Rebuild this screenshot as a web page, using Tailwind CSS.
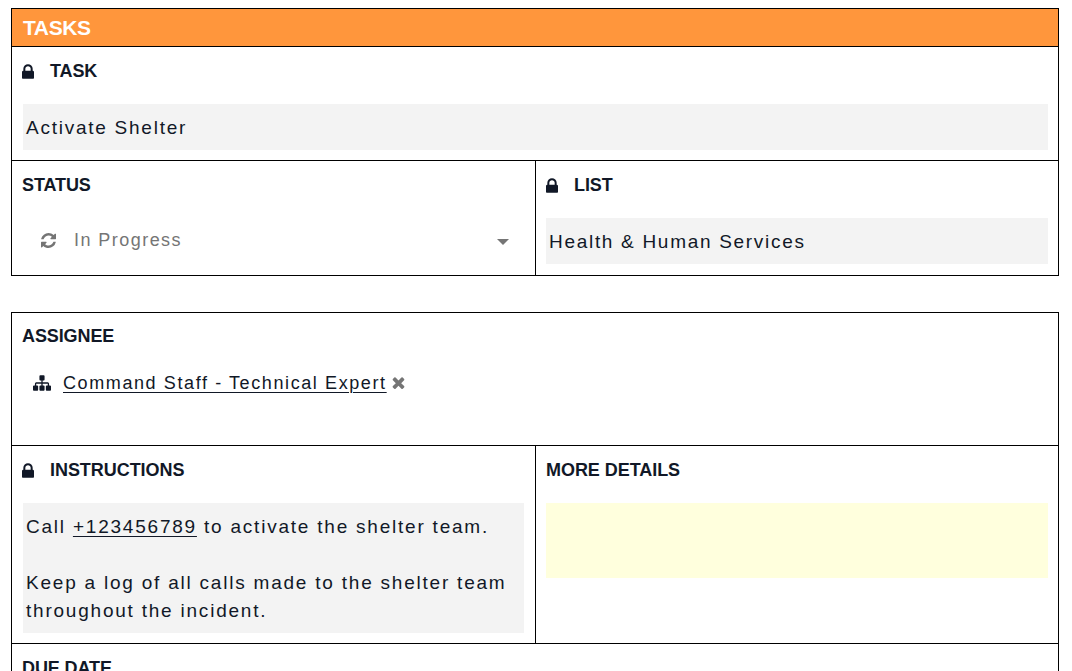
<!DOCTYPE html>
<html lang="en">

<head>
  <meta charset="UTF-8">
  <title>Tasks</title>
  <script src="https://cdn.jsdelivr.net/npm/@tailwindcss/browser@4"></script>
</head>

<body class="bg-white h-screen overflow-hidden font-['Liberation_Sans',Arial,sans-serif] text-[#111827]">
  <div class="pt-2 pl-[11px] w-[1059px]">
    <!-- Task card -->
    <div class="border border-black">
      <div class="h-[38px] bg-[#ff963c] border-b border-black pl-[11px] text-white text-[21px] font-bold leading-[37px] tracking-[-0.4px]">TASKS</div>

      <div class="h-[114px] border-b border-black px-[11px] pt-[13px]">
        <div class="flex items-center h-[22px] -ml-px text-[18px] font-bold tracking-[-0.1px]">
          <svg class="w-[12px] h-[15px] mr-[16px]" viewBox="0 128 1152 1408" fill="currentColor"><path d="M320 768h512v-192q0-106-75-181t-181-75-181 75-75 181v192zm832 96v576q0 40-28 68t-68 28h-960q-40 0-68-28t-28-68v-576q0-40 28-68t68-28h32v-192q0-184 132-316t316-132 316 132 132 316v192h32q40 0 68 28t28 68z"/></svg>
          TASK
        </div>
        <div class="mt-[22px] mr-[-1px] h-[46px] bg-[#f3f3f3] pl-[3px] text-[19px] leading-[47px] tracking-[1.75px]">Activate Shelter</div>
      </div>

      <div class="grid grid-cols-[524px_1fr] h-[114px]">
        <div class="border-r border-black px-[11px] pt-[13px]">
          <div class="h-[22px] text-[18px] font-bold leading-[22px] tracking-[-0.1px] -ml-px">STATUS</div>
          <div class="flex items-center h-[46px] mt-[21px] text-[#757575] text-[18px] tracking-[1.45px]">
            <svg class="w-[15px] h-[15px] ml-[18px] mr-[18px]" viewBox="128 128 1536 1536" fill="#757575"><path d="M1639 1056q0 5-1 7-64 268-268 434.5t-478 166.5q-146 0-282.5-55t-243.5-157l-129 129q-19 19-45 19t-45-19-19-45v-448q0-26 19-45t45-19h448q26 0 45 19t19 45-19 45l-137 137q71 66 161 102t187 36q134 0 250-65t186-179q11-17 53-117 8-23 30-23h192q13 0 22.5 9.5t9.5 22.5zm25-800v448q0 26-19 45t-45 19h-448q-26 0-45-19t-19-45 19-45l138-138q-148-137-349-137-134 0-250 65t-186 179q-11 17-53 117-8 23-30 23h-199q-13 0-22.5-9.5t-9.5-22.5v-7q65-268 270-434.5t480-166.5q146 0 284 55.5t245 156.5l130-129q19-19 45-19t45 19 19 45z"/></svg>
            <span>In Progress</span>
            <span class="ml-auto mr-[15px] mt-[3px] w-0 h-0 border-x-[6px] border-x-transparent border-t-[6px] border-t-[#757575]"></span>
          </div>
        </div>
        <div class="pl-[10px] pr-[10px] pt-[13px]">
          <div class="flex items-center h-[22px] text-[18px] font-bold tracking-[-0.1px]">
            <svg class="w-[12px] h-[15px] mr-[16px]" viewBox="0 128 1152 1408" fill="currentColor"><path d="M320 768h512v-192q0-106-75-181t-181-75-181 75-75 181v192zm832 96v576q0 40-28 68t-68 28h-960q-40 0-68-28t-28-68v-576q0-40 28-68t68-28h32v-192q0-184 132-316t316-132 316 132 132 316v192h32q40 0 68 28t28 68z"/></svg>
            LIST
          </div>
          <div class="mt-[22px] h-[46px] bg-[#f3f3f3] pl-[3px] text-[19px] leading-[47px] tracking-[1.7px]">Health &amp; Human Services</div>
        </div>
      </div>
    </div>

    <!-- Assignee card -->
    <div class="mt-[36px] border border-black border-b-0">
      <div class="h-[133px] border-b border-black px-[11px] pt-[12px]">
        <div class="h-[22px] text-[18px] font-bold leading-[22px] tracking-[-0.1px] -ml-px">ASSIGNEE</div>
        <div class="flex items-center h-[24px] mt-[24px] text-[18px] tracking-[1.6px]">
          <svg class="w-[18px] h-[16px] ml-[10px] mr-[12px]" viewBox="0 128 1792 1536" fill="currentColor"><path d="M1792 1248v320q0 40-28 68t-68 28h-320q-40 0-68-28t-28-68v-320q0-40 28-68t68-28h96v-192h-512v192h96q40 0 68 28t28 68v320q0 40-28 68t-68 28h-320q-40 0-68-28t-28-68v-320q0-40 28-68t68-28h96v-192h-512v192h96q40 0 68 28t28 68v320q0 40-28 68t-68 28h-320q-40 0-68-28t-28-68v-320q0-40 28-68t68-28h96v-192q0-52 38-90t90-38h512v-192h-96q-40 0-68-28t-28-68v-320q0-40 28-68t68-28h320q40 0 68 28t28 68v320q0 40-28 68t-68 28h-96v192h512q52 0 90 38t38 90v192h96q40 0 68 28t28 68z"/></svg>
          <a href="#" class="underline decoration-1 underline-offset-[3px]">Command Staff - Technical Expert</a>
          <svg class="w-[13px] h-[13px] ml-[5px] mb-[2px]" viewBox="110 238 1188 1316" fill="#757575"><path d="M1298 1322q0 40-28 68l-136 136q-28 28-68 28t-68-28l-294-294-294 294q-28 28-68 28t-68-28l-136-136q-28-28-28-68t28-68l294-294-294-294q-28-28-28-68t28-68l136-136q28-28 68-28t68 28l294 294 294-294q28-28 68-28t68 28l136 136q28 28 28 68t-28 68l-294 294 294 294q28 28 28 68z"/></svg>
        </div>
      </div>

      <div class="grid grid-cols-[524px_1fr] h-[198px] border-b border-black">
        <div class="border-r border-black px-[11px] pt-[13px]">
          <div class="flex items-center h-[22px] -ml-px text-[18px] font-bold tracking-[-0.05px]">
            <svg class="w-[12px] h-[15px] mr-[16px]" viewBox="0 128 1152 1408" fill="currentColor"><path d="M320 768h512v-192q0-106-75-181t-181-75-181 75-75 181v192zm832 96v576q0 40-28 68t-68 28h-960q-40 0-68-28t-28-68v-576q0-40 28-68t68-28h32v-192q0-184 132-316t316-132 316 132 132 316v192h32q40 0 68 28t28 68z"/></svg>
            INSTRUCTIONS
          </div>
          <div class="mt-[22px] h-[130px] bg-[#f3f3f3] pl-[3px] pt-[10px] text-[19px] leading-[28px] tracking-[1.78px]">
            <p>Call <a href="#" class="underline decoration-1 underline-offset-[3px]">+123456789</a> to activate the shelter team.</p>
            <p class="mt-[28px]">Keep a log of all calls made to the shelter team throughout the incident.</p>
          </div>
        </div>
        <div class="pl-[10px] pr-[10px] pt-[13px]">
          <div class="h-[22px] text-[18px] font-bold leading-[22px] tracking-[-0.05px]">MORE DETAILS</div>
          <div class="mt-[22px] h-[75px] bg-[#ffffdd]"></div>
        </div>
      </div>

      <div class="px-[11px] pt-[13px] h-[80px]">
        <div class="h-[22px] text-[18px] font-bold leading-[22px] tracking-[-0.1px] -ml-px">DUE DATE</div>
      </div>
    </div>
  </div>
</body>

</html>
